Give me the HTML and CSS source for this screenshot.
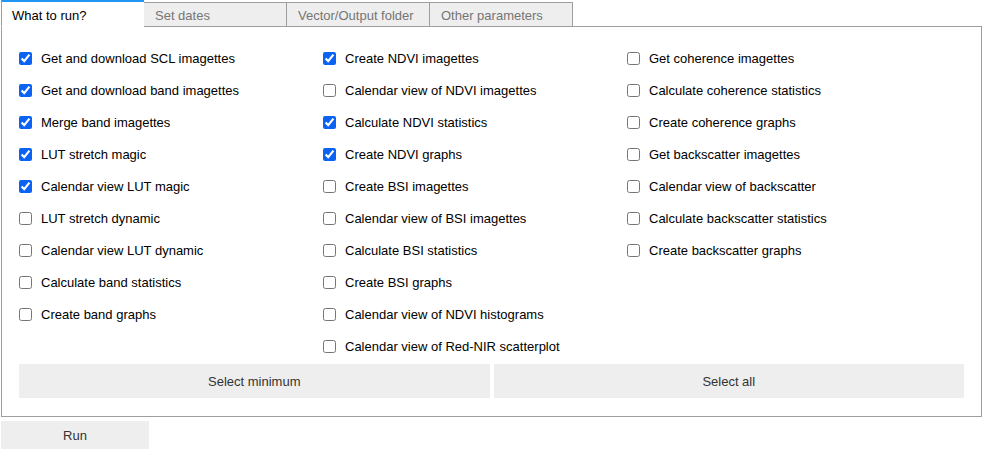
FILE: index.html
```html
<!DOCTYPE html>
<html>
<head>
<meta charset="utf-8">
<link rel="stylesheet" href="styles.css">
</head>
<body>
<div class="root">
  <div class="tabbar">
    <div class="tab active">What to run?</div>
    <div class="tab">Set dates</div>
    <div class="tab">Vector/Output folder</div>
    <div class="tab">Other parameters</div>
    <div class="tabfill"></div>
  </div>
  <div class="panel">
    <div class="grid">
      <div class="col">
        <label class="cb"><input type="checkbox" checked><span>Get and download SCL imagettes</span></label>
        <label class="cb"><input type="checkbox" checked><span>Get and download band imagettes</span></label>
        <label class="cb"><input type="checkbox" checked><span>Merge band imagettes</span></label>
        <label class="cb"><input type="checkbox" checked><span>LUT stretch magic</span></label>
        <label class="cb"><input type="checkbox" checked><span>Calendar view LUT magic</span></label>
        <label class="cb"><input type="checkbox"><span>LUT stretch dynamic</span></label>
        <label class="cb"><input type="checkbox"><span>Calendar view LUT dynamic</span></label>
        <label class="cb"><input type="checkbox"><span>Calculate band statistics</span></label>
        <label class="cb"><input type="checkbox"><span>Create band graphs</span></label>
      </div>
      <div class="col">
        <label class="cb"><input type="checkbox" checked><span>Create NDVI imagettes</span></label>
        <label class="cb"><input type="checkbox"><span>Calendar view of NDVI imagettes</span></label>
        <label class="cb"><input type="checkbox" checked><span>Calculate NDVI statistics</span></label>
        <label class="cb"><input type="checkbox" checked><span>Create NDVI graphs</span></label>
        <label class="cb"><input type="checkbox"><span>Create BSI imagettes</span></label>
        <label class="cb"><input type="checkbox"><span>Calendar view of BSI imagettes</span></label>
        <label class="cb"><input type="checkbox"><span>Calculate BSI statistics</span></label>
        <label class="cb"><input type="checkbox"><span>Create BSI graphs</span></label>
        <label class="cb"><input type="checkbox"><span>Calendar view of NDVI histograms</span></label>
        <label class="cb"><input type="checkbox"><span>Calendar view of Red-NIR scatterplot</span></label>
      </div>
      <div class="col">
        <label class="cb"><input type="checkbox"><span>Get coherence imagettes</span></label>
        <label class="cb"><input type="checkbox"><span>Calculate coherence statistics</span></label>
        <label class="cb"><input type="checkbox"><span>Create coherence graphs</span></label>
        <label class="cb"><input type="checkbox"><span>Get backscatter imagettes</span></label>
        <label class="cb"><input type="checkbox"><span>Calendar view of backscatter</span></label>
        <label class="cb"><input type="checkbox"><span>Calculate backscatter statistics</span></label>
        <label class="cb"><input type="checkbox"><span>Create backscatter graphs</span></label>
      </div>
    </div>
    <div class="btnrow">
      <button class="btn">Select minimum</button>
      <button class="btn">Select all</button>
    </div>
  </div>
  <button class="btn run">Run</button>
</div>
</body>
</html>
```

FILE: styles.css
```css
html, body {
  margin: 0;
  padding: 0;
  background: #fff;
}
body {
  font-family: "Liberation Sans", Arial, sans-serif;
  font-size: 13px;
  color: #000;
}
.root {
  padding-left: 1px;
  width: 981px;
}
.tabbar {
  display: flex;
  height: 27px;
  align-items: flex-end;
  position: relative;
  z-index: 1;
}
.tab {
  box-sizing: border-box;
  width: 143px;
  height: 25px;
  padding: 3px 10px 0 11px;
  line-height: 20px;
  background: #eeeeee;
  color: #757575;
  border: 1px solid #9e9e9e;
  border-left: none;
  border-bottom: 1px solid #9e9e9e;
  font-size: 13px;
  white-space: nowrap;
}
.tab.active {
  height: 27px;
  background: #fff;
  color: #000;
  border-top: 2px solid #2196f3;
  border-left: 1px solid #9e9e9e;
  border-right: none;
  border-bottom: 1px solid #fff;
  padding: 4px 10px 0 10px;
  line-height: 20px;
}
.tabfill {
  flex: 1;
  height: 1px;
  border-bottom: 1px solid #9e9e9e;
}
.panel {
  box-sizing: border-box;
  border: 1px solid #9e9e9e;
  border-top: none;
  margin-top: -1px;
  padding: 16px 17px 17px 17px;
  height: 391px;
}
.grid {
  display: flex;
  height: 320px;
}
.col {
  width: 304px;
  display: flex;
  flex-direction: column;
}
.cb {
  display: flex;
  align-items: center;
  height: 32px;
  gap: 9px;
  white-space: nowrap;
}
.cb input {
  margin: 0;
  width: 13px;
  height: 13px;
  accent-color: #0b63f6;
}
.btnrow {
  display: flex;
  gap: 4px;
  margin-top: 2px;
}
.btn {
  font-family: "Liberation Sans", Arial, sans-serif;
  font-size: 13px;
  color: #333;
  background: #eeeeee;
  border: none;
  height: 34px;
  padding: 0;
  flex: 1;
  margin: 0;
}
.run {
  display: block;
  width: 148px;
  height: 28px;
  margin-top: 4px;
}
```
